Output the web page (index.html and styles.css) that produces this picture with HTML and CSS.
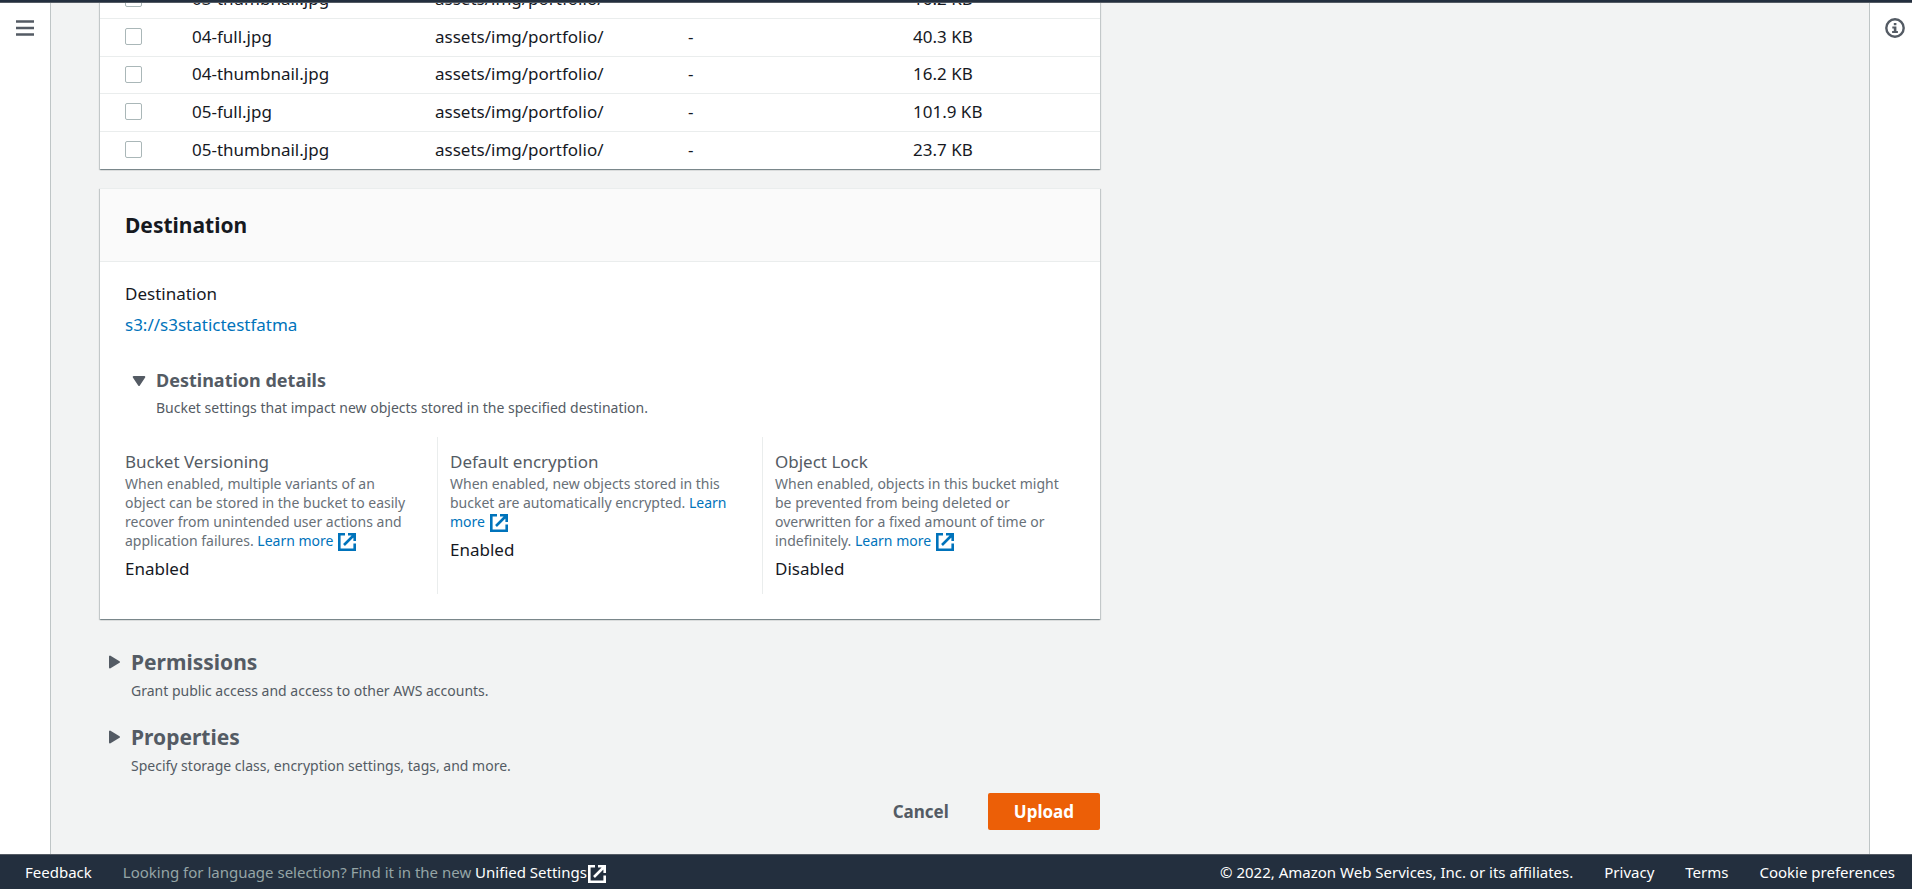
FILE: index.html
```html
<!DOCTYPE html>
<html lang="en">
<head>
<meta charset="utf-8">
<title>Upload objects</title>
<link rel="stylesheet" href="styles.css">
</head>
<body>
<svg class="defs" aria-hidden="true">
  <symbol id="external" viewBox="0 0 20 20"><path d="M11 2.300h6.700V9M7 13L17 3M17.700 11.500v6.200H2.300V2.300h5.700" fill="none" stroke="currentColor" stroke-width="2.600"/></symbol>
  <symbol id="caret-right" viewBox="0 0 20 20"><path d="M5 4.500v11l9-5.500z" fill="currentColor" stroke="currentColor" stroke-width="2" stroke-linejoin="round"/></symbol>
  <symbol id="caret-down" viewBox="0 0 20 20"><path d="M4.700 6h10.600l-5.300 8z" fill="currentColor" stroke="currentColor" stroke-width="2" stroke-linejoin="round"/></symbol>
</svg>
<div class="shell">
  <header class="topbar"></header>
  <div class="body">
    <nav class="rail rail-left">
      <button class="icon-button" aria-label="Open navigation">
        <svg width="20" height="20" viewBox="0 0 20 20"><path d="M1 3.500h18M1 10h18M1 16.500h18" stroke="currentColor" stroke-width="2.500"/></svg>
      </button>
    </nav>
    <main class="scroller">
      <div class="content">
        <section class="card">
          <table class="files">
            <colgroup><col class="col-check"><col class="col-name"><col class="col-folder"><col class="col-type"><col class="col-size"></colgroup>
            <tbody>
              <tr><td><input type="checkbox" aria-label="Select 03-thumbnail.jpg"></td><td>03-thumbnail.jpg</td><td>assets/img/portfolio/</td><td>-</td><td>16.2 KB</td></tr>
              <tr><td><input type="checkbox" aria-label="Select 04-full.jpg"></td><td>04-full.jpg</td><td>assets/img/portfolio/</td><td>-</td><td>40.3 KB</td></tr>
              <tr><td><input type="checkbox" aria-label="Select 04-thumbnail.jpg"></td><td>04-thumbnail.jpg</td><td>assets/img/portfolio/</td><td>-</td><td>16.2 KB</td></tr>
              <tr><td><input type="checkbox" aria-label="Select 05-full.jpg"></td><td>05-full.jpg</td><td>assets/img/portfolio/</td><td>-</td><td>101.9 KB</td></tr>
              <tr><td><input type="checkbox" aria-label="Select 05-thumbnail.jpg"></td><td>05-thumbnail.jpg</td><td>assets/img/portfolio/</td><td>-</td><td>23.7 KB</td></tr>
            </tbody>
          </table>
        </section>

        <section class="card destination">
          <div class="card-head"><h2>Destination</h2></div>
          <div class="card-body">
            <div class="label">Destination</div>
            <a class="bucket" href="#">s3://s3statictestfatma</a>
            <details class="expander inner" open>
              <summary>
                <svg class="caret"><use href="#caret-down"/></svg>
                <span class="summary-text"><span class="title">Destination details</span><span class="sub">Bucket settings that impact new objects stored in the specified destination.</span></span>
              </summary>
              <div class="columns">
                <div class="column">
                  <div class="column-title">Bucket Versioning</div>
                  <p>When enabled, multiple variants of an object can be stored in the bucket to easily recover from unintended user actions and application failures. <a href="#">Learn more&nbsp;<svg class="ext"><use href="#external"/></svg></a></p>
                  <div class="value">Enabled</div>
                </div>
                <div class="column">
                  <div class="column-title">Default encryption</div>
                  <p>When enabled, new objects stored in this bucket are automatically encrypted. <a href="#">Learn more&nbsp;<svg class="ext"><use href="#external"/></svg></a></p>
                  <div class="value">Enabled</div>
                </div>
                <div class="column">
                  <div class="column-title">Object Lock</div>
                  <p>When enabled, objects in this bucket might be prevented from being deleted or overwritten for a fixed amount of time or indefinitely. <a href="#">Learn more&nbsp;<svg class="ext"><use href="#external"/></svg></a></p>
                  <div class="value">Disabled</div>
                </div>
              </div>
            </details>
          </div>
        </section>

        <details class="expander outer">
          <summary>
            <svg class="caret"><use href="#caret-right"/></svg>
            <span class="summary-text"><span class="title">Permissions</span><span class="sub">Grant public access and access to other AWS accounts.</span></span>
          </summary>
        </details>
        <details class="expander outer">
          <summary>
            <svg class="caret"><use href="#caret-right"/></svg>
            <span class="summary-text"><span class="title">Properties</span><span class="sub">Specify storage class, encryption settings, tags, and more.</span></span>
          </summary>
        </details>

        <div class="actions">
          <button class="button link">Cancel</button>
          <button class="button primary">Upload</button>
        </div>
      </div>
    </main>
    <aside class="rail rail-right">
      <button class="icon-button" aria-label="Open help panel">
        <svg width="20" height="20" viewBox="0 0 20 20"><circle cx="10" cy="10" r="8.700" fill="none" stroke="currentColor" stroke-width="2.400"/><path d="M8.800 5h2.600v2.200H8.800zM7.300 8.500h4.100v4.500h1.500v1.900H7.100V13h1.700v-2.600H7.300z" fill="currentColor"/></svg>
      </button>
    </aside>
  </div>
  <footer class="footer">
    <a class="feedback" href="#">Feedback</a>
    <span class="language">Looking for language selection? Find it in the new <a href="#">Unified Settings<svg class="ext"><use href="#external"/></svg></a></span>
    <span class="copyright">© 2022, Amazon Web Services, Inc. or its affiliates.</span>
    <a href="#">Privacy</a>
    <a href="#">Terms</a>
    <a href="#">Cookie preferences</a>
  </footer>
</div>
</body>
</html>
```
FILE: styles.css
```css
* { box-sizing: border-box; }

body {
  margin: 0;
  background: #f2f3f3;
  color: #16191f;
  font: 17px/24px "Noto Sans", "Open Sans", sans-serif;
}

h2, p { margin: 0; }
a { color: #0073bb; text-decoration: none; }
button { font: inherit; color: inherit; border: 0; background: none; cursor: pointer; }
.defs { display: none; }

.shell { display: flex; flex-direction: column; height: 100vh; }
.topbar { flex: none; height: 3px; background: #232f3e; border-bottom: 1px solid #545b64; }
.body { flex: 1; display: flex; min-height: 0; }

.rail { flex: none; background: #fff; padding-top: 15px; color: #545b64; }
.rail-left { width: 51px; border-right: 1px solid #bfc5c6; }
.rail-right { width: 43px; border-left: 1px solid #bfc5c6; }
.icon-button { display: block; width: 100%; height: 20px; padding: 0; line-height: 0; }
.rail-right .icon-button { padding-left: 8px; }

/* Opens at the bottom of the page. */
.scroller {
  flex: 1;
  display: flex;
  flex-direction: column-reverse;
  overflow-y: auto;
  scrollbar-width: none;
  padding: 0 49px;
}
.content { max-width: 1000px; padding-bottom: 24px; }

.card {
  background: #fff;
  box-shadow: 0 1px 1px rgba(0, 28, 36, .3), 1px 1px 1px rgba(0, 28, 36, .15), -1px 1px 1px rgba(0, 28, 36, .15);
}

.files { width: 100%; table-layout: fixed; border-collapse: collapse; }
.files td { height: 38px; padding: 0 0 1px; border-top: 1px solid #eaeded; }
.files tr:nth-child(3n) td { height: 37px; }
.files td:first-child { padding-left: 25px; }
.files input {
  appearance: none;
  display: block;
  width: 17px;
  height: 17px;
  margin: 0;
  border: 1px solid #aab7b8;
  border-radius: 2px;
  background: #fff;
}
.col-check { width: 92px; }
.col-name { width: 243px; }
.col-folder { width: 253px; }
.col-type { width: 225px; }

.destination { margin-top: 19px; border-top: 1px solid #eaeded; }
.card-head { padding: 20px 25px; background: #fafafa; border-bottom: 1px solid #eaeded; }
.card-head h2 { font-size: 21px; line-height: 32px; font-weight: 700; }
.card-body { padding: 20px 25px 25px; }
.bucket { display: inline-block; margin-top: 7px; }

.expander summary { display: flex; gap: 7px; list-style: none; cursor: pointer; color: #545b64; }
.summary-text { display: flex; flex-direction: column; }
.caret { flex: none; width: 20px; height: 20px; }
.title { font-weight: 700; }
.sub { margin: 5px 0 1px; font-size: 14px; line-height: 20px; }

.inner { margin-top: 30px; }
.inner summary { padding-left: 4px; }
.inner .caret { margin-top: 4px; }
.inner .title { font-size: 18px; line-height: 26px; }

.columns { display: grid; grid-template-columns: repeat(3, 1fr); gap: 25px; margin-top: 18px; }
.column { padding: 13px 10px 11px 0; min-height: 157px; }
.column + .column { margin-left: -13px; padding-left: 12px; border-left: 1px solid #eaeded; }
.column-title { color: #545b64; }
.column p { color: #687078; font-size: 14px; line-height: 19px; }
.value { margin-top: 7px; line-height: 24px; }
.ext { width: 20px; height: 20px; vertical-align: middle; margin: -3px 0; }

.outer { margin-top: 29px; }
.outer + .outer { margin-top: 21px; }
.outer summary { padding-left: 5px; gap: 6px; }
.outer .caret { margin-top: 4px; }
.outer .title { font-size: 21px; line-height: 28px; }

.actions { display: flex; justify-content: flex-end; gap: 13px; margin-top: 16px; }
.button { height: 37px; padding: 0 26px; border-radius: 2px; font-weight: 700; }
.link { color: #545b64; }
.primary { background: #ec5f07; color: #fff; }

.footer {
  flex: none;
  display: flex;
  align-items: center;
  height: 35px;
  padding: 0 17px 0 25px;
  border-top: 1px solid #545b64;
  background: #232f3e;
  color: #fff;
  font-size: 15px;
  line-height: 20px;
  gap: 31px;
  white-space: nowrap;
}
.footer a { color: #fff; }
.language { color: #95a5a6; }
.copyright { margin-left: auto; }
```
